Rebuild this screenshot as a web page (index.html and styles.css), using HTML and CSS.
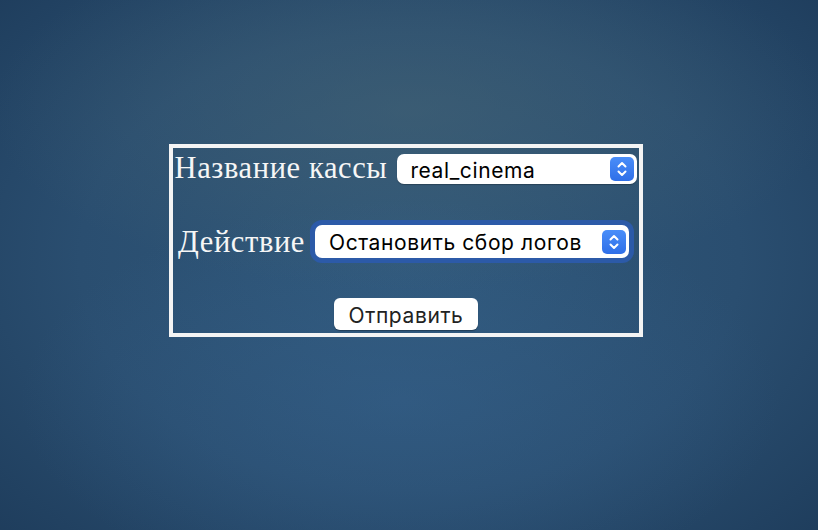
FILE: index.html
```html
<!DOCTYPE html>
<html lang="ru">
<head>
<meta charset="utf-8">
<title>Касса</title>
<link rel="stylesheet" href="styles.css">
</head>
<body>
<div class="page">
  <form class="panel">
    <div class="row row-first">
      <label class="label">Название кассы</label>
      <div class="select">
        <span class="select-text">real_cinema</span>
        <span class="stepper">
          <svg width="24" height="24" viewBox="0 0 24 24">
            <path d="M8.5 9.5 L12 6 L15.5 9.5" fill="none" stroke="#fff" stroke-width="2" stroke-linecap="round" stroke-linejoin="round"/>
            <path d="M8.5 14.5 L12 18 L15.5 14.5" fill="none" stroke="#fff" stroke-width="2" stroke-linecap="round" stroke-linejoin="round"/>
          </svg>
        </span>
      </div>
    </div>
    <div class="row row-second">
      <label class="label">Действие</label>
      <div class="select select-focused">
        <span class="select-text">Остановить сбор логов</span>
        <span class="stepper">
          <svg width="24" height="24" viewBox="0 0 24 24">
            <path d="M8.5 9.5 L12 6 L15.5 9.5" fill="none" stroke="#fff" stroke-width="2" stroke-linecap="round" stroke-linejoin="round"/>
            <path d="M8.5 14.5 L12 18 L15.5 14.5" fill="none" stroke="#fff" stroke-width="2" stroke-linecap="round" stroke-linejoin="round"/>
          </svg>
        </span>
      </div>
    </div>
    <div class="row row-button">
      <button type="button" class="submit">Отправить</button>
    </div>
  </form>
</div>
</body>
</html>
```

FILE: styles.css
```css
html, body {
  margin: 0;
  padding: 0;
  height: 100%;
}

body {
  background-color: #27496a;
  background-image:
    radial-gradient(ellipse 420px 180px at 410px 110px, rgba(70, 100, 115, 0.55), rgba(70, 100, 115, 0) 100%),
    radial-gradient(ellipse 380px 200px at 400px 400px, rgba(55, 100, 145, 0.45), rgba(55, 100, 145, 0) 100%),
    radial-gradient(ellipse 600px 420px at 410px 260px, #30587a 0%, #2a4e70 55%, #1d3b5a 100%);
  font-family: "Liberation Serif", serif;
}

.page {
  display: flex;
  justify-content: center;
  padding-top: 144px;
  padding-right: 6px;
}

.panel {
  border: 4px solid #f4f4f4;
  width: 466px;
  height: 185px;
  display: flex;
  flex-direction: column;
  align-items: center;
  margin: 0;
}

.row {
  display: flex;
  align-items: center;
  justify-content: center;
}

.row-first {
  margin-top: 6px;
  gap: 10px;
}

.row-second {
  margin-top: 36px;
  gap: 5px;
}

.row-button {
  margin-top: 35px;
}

.label {
  color: #f6f6f6;
  font-family: "Liberation Serif", serif;
  font-size: 30.5px;
  letter-spacing: 0.6px;
  line-height: 30px;
  white-space: nowrap;
}

.row-first .label {
  margin-top: -3px;
}

.row-second .label {
  margin-top: 0;
}

.select {
  box-sizing: border-box;
  display: flex;
  align-items: center;
  justify-content: space-between;
  background: #ffffff;
  border-radius: 7px;
  height: 30px;
  width: 240px;
  padding: 0 3px 0 13px;
  box-shadow: 0 1px 1px rgba(0, 0, 0, 0.25);
}

.select-focused {
  width: 314px;
  height: 33px;
  padding-left: 14px;
  box-shadow: 0 0 0 5px #2c5aa8;
  margin: 5px 5px 5px 5px;
}

.select-text {
  font-family: "Inter", "Liberation Sans", sans-serif;
  font-size: 21px;
  color: #000;
  letter-spacing: 0.6px;
  white-space: nowrap;
  padding-top: 2px;
}

.stepper {
  display: flex;
  width: 24px;
  height: 24px;
  border-radius: 5px;
  background: linear-gradient(#4a8ef9, #2f6fe8);
}

.submit {
  box-sizing: border-box;
  width: 144px;
  height: 32px;
  background: #ffffff;
  border: none;
  border-radius: 6px;
  font-family: "Inter", "Liberation Sans", sans-serif;
  font-size: 21px;
  color: #222;
  padding: 3px 0 0 0;
  box-shadow: 0 1px 1px rgba(0, 0, 0, 0.3);
  letter-spacing: 0.6px;
}
```
